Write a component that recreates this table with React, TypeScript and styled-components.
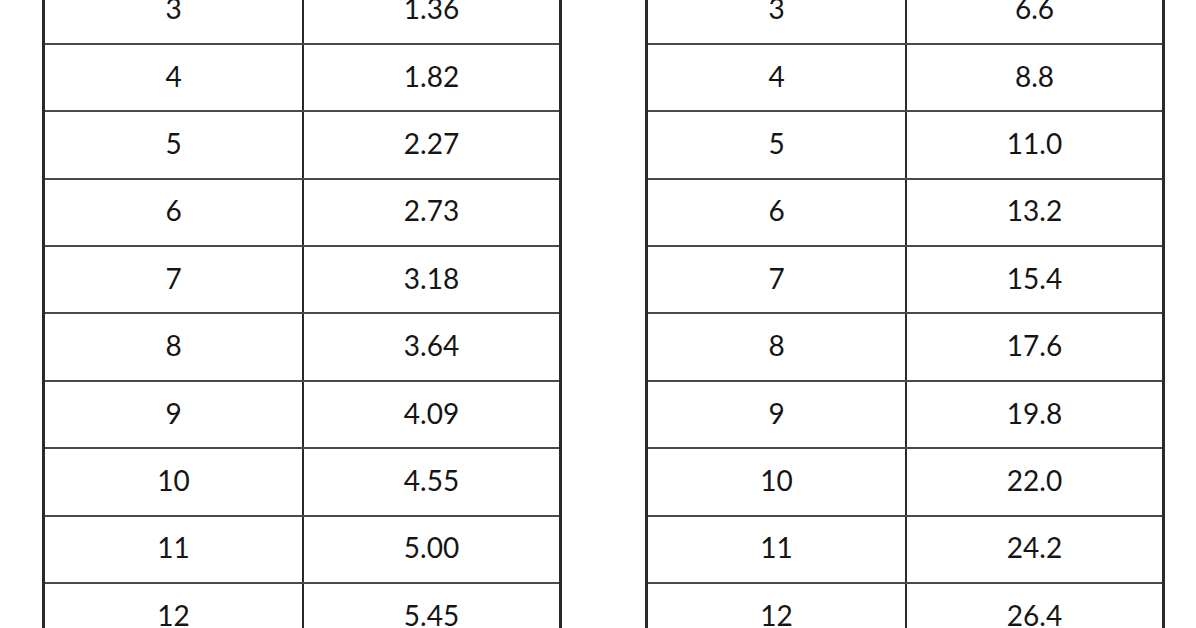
import styled, { createGlobalStyle } from "styled-components";

const GlobalStyle = createGlobalStyle`
  html, body {
    margin: 0;
    padding: 0;
    background: #ffffff;
    overflow: hidden;
  }
`;

const leftRows: [string, string][] = [
  ["3", "1.36"],
  ["4", "1.82"],
  ["5", "2.27"],
  ["6", "2.73"],
  ["7", "3.18"],
  ["8", "3.64"],
  ["9", "4.09"],
  ["10", "4.55"],
  ["11", "5.00"],
  ["12", "5.45"],
];

const rightRows: [string, string][] = [
  ["3", "6.6"],
  ["4", "8.8"],
  ["5", "11.0"],
  ["6", "13.2"],
  ["7", "15.4"],
  ["8", "17.6"],
  ["9", "19.8"],
  ["10", "22.0"],
  ["11", "24.2"],
  ["12", "26.4"],
];

const App = () => {
  return (
    <>
      <GlobalStyle />
      <Page>
        <Table>
          {leftRows.map(([n, v]) => (
            <Row key={n}>
              <Cell>{n}</Cell>
              <Cell $divider>{v}</Cell>
            </Row>
          ))}
        </Table>
        <Table>
          {rightRows.map(([n, v]) => (
            <Row key={n}>
              <Cell>{n}</Cell>
              <Cell $divider>{v}</Cell>
            </Row>
          ))}
        </Table>
      </Page>
    </>
  );
};

export default App;

const Page = styled.div`
  width: 1196px;
  height: 628px;
  overflow: hidden;
  display: flex;
  gap: 83px;
  padding-left: 42px;
  box-sizing: border-box;
  font-family: Lato, "Liberation Sans", sans-serif;
  color: #151515;
`;

const Table = styled.div`
  width: 520px;
  margin-top: -22.4px;
  flex-shrink: 0;
  border-left: 3px solid #2a2a2a;
  border-right: 3px solid #2a2a2a;
  box-sizing: border-box;
  align-self: flex-start;
`;

const Row = styled.div`
  display: grid;
  grid-template-columns: 1fr 1fr;
  height: 67.375px;
  box-sizing: border-box;
  border-bottom: 2px solid #4a4a4a;
`;

const Cell = styled.div<{ $divider?: boolean }>`
  display: flex;
  align-items: center;
  justify-content: center;
  padding-bottom: 4px;
  font-size: 28px;
  border-left: ${({ $divider }) => ($divider ? "2px solid #2a2a2a" : "none")};
`;
